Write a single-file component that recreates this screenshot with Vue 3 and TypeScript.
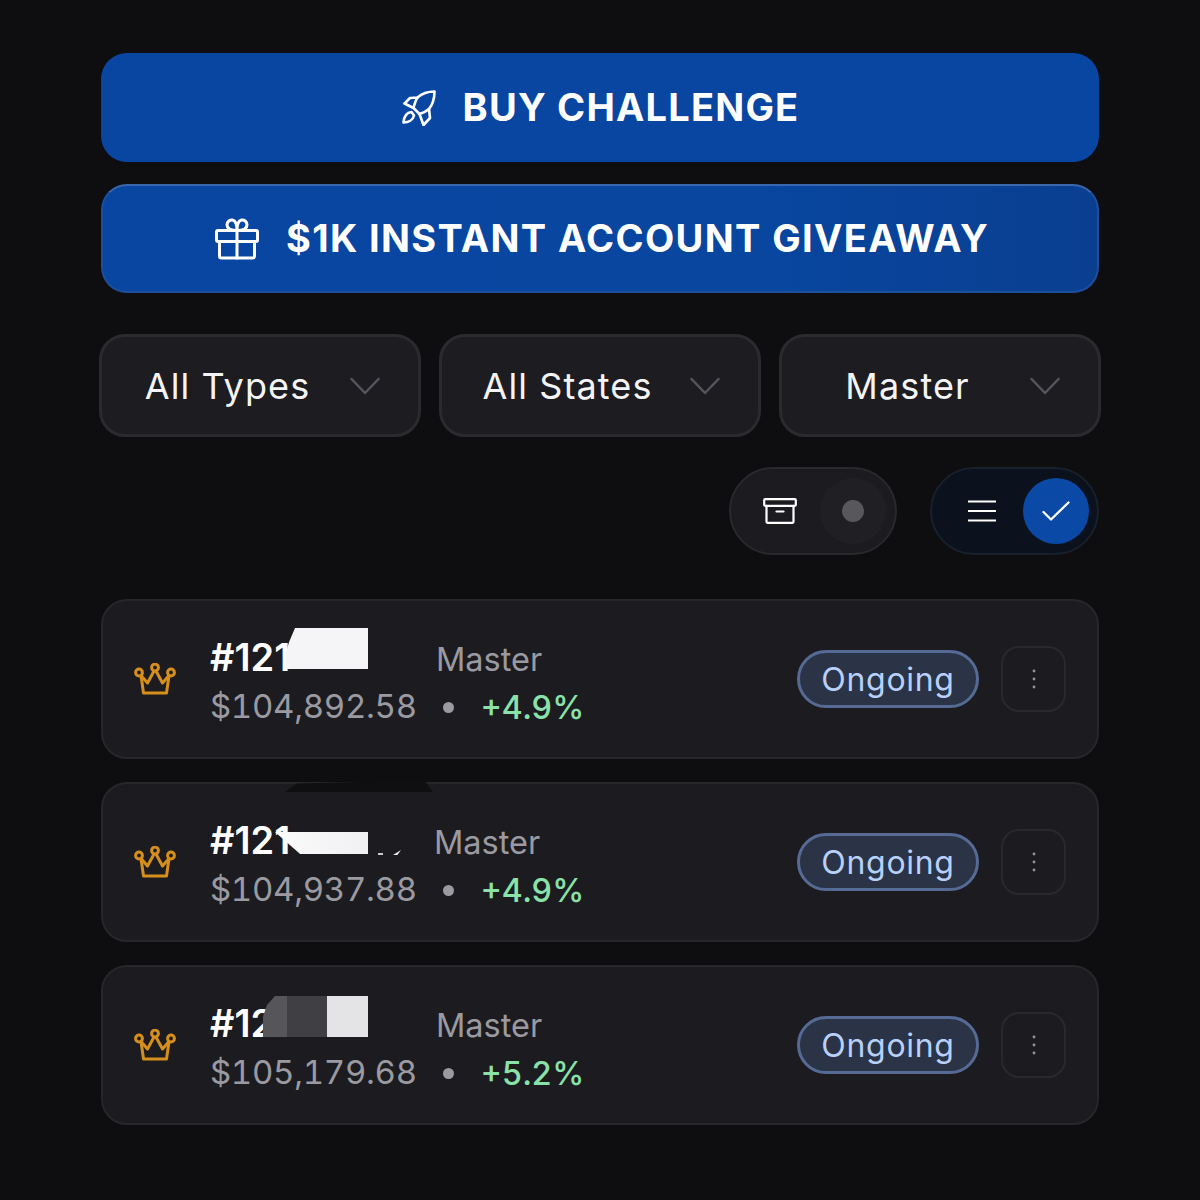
<script setup lang="ts">
interface Account {
  id: string
  amount: string
  gain: string
  shifted?: boolean
  patch: string
}

const filters = ['All Types', 'All States', 'Master']

const accounts: Account[] = [
  { id: '#121', amount: '$104,892.58', gain: '+4.9%', patch: 'patch-one' },
  { id: '#121', amount: '$104,937.88', gain: '+4.9%', shifted: true, patch: 'patch-two' },
  { id: '#12', amount: '$105,179.68', gain: '+5.2%', patch: 'patch-three' },
]
</script>

<template>
  <main class="page">
    <button class="cta">
      <svg class="rocket" viewBox="0 0 36 36" fill="none" stroke="currentColor" stroke-width="2.6" stroke-linejoin="round" stroke-linecap="round">
        <path d="M33.500 1.500C27 1.500 21 3.500 16.500 7.500L9 8L3.500 13.500L12.500 18L18.500 24L22.500 35L29 28L28 19C32 14 33.500 8 33.500 1.500Z" />
        <path d="M16.500 7.500C14.500 10.500 13.500 14 12.500 18M18.500 24C22 23 25 21.500 28 19" />
        <path d="M10.500 22C6 22.500 3 26.500 2.500 32.500C7.500 32.500 12 30 13 25.500Z" />
      </svg>
      <span class="cta-label">BUY CHALLENGE</span>
    </button>
    <button class="cta cta-promo">
      <svg class="gift" viewBox="0 0 44 42" fill="none" stroke="currentColor" stroke-width="3" stroke-linejoin="round" stroke-linecap="round">
        <rect x="1.500" y="12.500" width="41" height="11" rx="1.500" />
        <path d="M4.500 23.500V38a2 2 0 0 0 2 2h31a2 2 0 0 0 2-2V23.500" />
        <path d="M22 12.500V40" />
        <path d="M22 12.500C17 12.500 12 12 12 6.800C12 3.500 15 1.500 17.500 2C20.500 2.700 22 7 22 12.500C22 7 23.500 2.700 26.500 2C29 1.500 32 3.500 32 6.800C32 12 27 12.500 22 12.500Z" />
      </svg>
      <span class="cta-label">$1K INSTANT ACCOUNT GIVEAWAY</span>
    </button>

    <div class="filters">
      <div v-for="filter in filters" :key="filter" class="select">
        <span class="select-label">{{ filter }}</span>
        <svg class="chevron" viewBox="0 0 30 18" fill="none" stroke="currentColor" stroke-width="2.500" stroke-linecap="round" stroke-linejoin="round">
          <path d="M1.500 2L15 16L28.500 2" />
        </svg>
      </div>
    </div>

    <div class="toggles">
      <div class="toggle toggle-archive">
        <svg class="archive" viewBox="0 0 34 26" fill="none" stroke="currentColor" stroke-width="2.200" stroke-linejoin="round" stroke-linecap="round">
          <rect x="1.200" y="1.200" width="31.600" height="6.600" rx="1" />
          <path d="M3.500 7.800V23.800a1 1 0 0 0 1 1h25a1 1 0 0 0 1-1V7.800" />
          <path d="M13.500 13.500H20.500" />
        </svg>
        <span class="knob"><span class="knob-dot"></span></span>
      </div>
      <div class="toggle toggle-list">
        <svg class="menu-icon" viewBox="0 0 30 22" fill="none" stroke="currentColor" stroke-width="2.200">
          <path d="M1 1.500H29M1 11H29M1 20.500H29" />
        </svg>
        <span class="check">
          <svg viewBox="0 0 28 20" fill="none" stroke="currentColor" stroke-width="2.300" stroke-linecap="round" stroke-linejoin="round">
            <path d="M1.500 11L9 18.500L26.500 1.500" />
          </svg>
        </span>
      </div>
    </div>

    <section class="accounts">
      <article v-for="account in accounts" :key="account.amount" class="card">
        <svg class="crown" viewBox="0 0 42 32" fill="none" stroke="currentColor" stroke-width="3" stroke-linejoin="round">
          <circle cx="5" cy="9.500" r="3.400" />
          <circle cx="21" cy="4.500" r="3.400" />
          <circle cx="37" cy="9.500" r="3.400" />
          <path d="M7 12.500L13.500 20L20 8M22 8L28.500 20L35 12.500" />
          <path d="M7 12.500L9.500 30H32.500L35 12.500" />
        </svg>
        <div class="info">
          <div class="info-top">
            <span class="account-id" :class="{ shifted: account.shifted }">{{ account.id }}</span>
            <span class="account-type">Master</span>
          </div>
          <div class="info-bottom">
            <span class="amount">{{ account.amount }}</span>
            <span class="bullet"></span>
            <span class="gain">{{ account.gain }}</span>
          </div>
        </div>
        <span class="badge">Ongoing</span>
        <button class="more">
          <svg viewBox="0 0 4 20" fill="currentColor">
            <circle cx="2" cy="2" r="1.400" />
            <circle cx="2" cy="10" r="1.400" />
            <circle cx="2" cy="18" r="1.400" />
          </svg>
        </button>
        <div class="patch" :class="account.patch"></div>
        <template v-if="account.shifted">
          <div class="blot"></div>
          <div class="speck speck-dot"></div>
          <div class="speck speck-slash"></div>
        </template>
      </article>
    </section>
  </main>
</template>

<style>
html,
body {
  background: #0e0e10;
}
</style>

<style scoped>
.page {
  box-sizing: border-box;
  width: 1200px;
  height: 1200px;
  padding: 53px 101px 0;
  background: #0e0e10;
  font-family: Inter, "Liberation Sans", sans-serif;
  display: flex;
  flex-direction: column;
}

.cta {
  height: 109px;
  border: 0;
  border-radius: 26px;
  padding: 0;
  background: #0846a2;
  color: #fff;
  font: inherit;
  font-size: 38px;
  font-weight: 700;
  letter-spacing: 1.200px;
  display: flex;
  align-items: center;
  justify-content: center;
  gap: 26px;
}

.cta-label {
  margin-top: -2px;
}

.cta-promo {
  margin-top: 22px;
  gap: 27px;
  padding-left: 4px;
  letter-spacing: 1.350px;
  border: 2px solid #1c4f9c;
  border-top-color: #3a68ad;
  background: linear-gradient(90deg, #0846a2 0%, #0846a0 65%, #0a3f90 100%);
}

.rocket {
  width: 36px;
  height: 36px;
}

.gift {
  width: 44px;
  height: 42px;
}

.filters {
  display: flex;
  gap: 18px;
  margin: 41px -2px 0;
}

.select {
  box-sizing: border-box;
  width: 322px;
  height: 103px;
  border: 3px solid #2b2b2f;
  border-radius: 26px;
  background: #1c1c21;
  padding: 0 38.5px 0 29px;
  display: flex;
  align-items: center;
  color: #f4f4f6;
}

.select-label {
  flex: 1;
  font-size: 36px;
  letter-spacing: 1.1px;
  text-align: center;
  white-space: nowrap;
}

.chevron {
  width: 30px;
  height: 18px;
  margin-left: 25.5px;
  color: #55555b;
}

.toggles {
  display: flex;
  justify-content: flex-end;
  gap: 33px;
  margin-top: 30px;
}

.toggle {
  box-sizing: border-box;
  height: 88px;
  border-radius: 44px;
  border: 2px solid #29292d;
  display: flex;
  align-items: center;
  justify-content: space-between;
}

.toggle-archive {
  width: 168px;
  padding: 0 9px 0 32px;
  background: #1b1b20;
}

.toggle-list {
  width: 169px;
  padding: 0 8px 0 35px;
  background: #0b121d;
  border-color: #18202c;
}

.archive {
  width: 34px;
  height: 26px;
  color: #fff;
}

.knob {
  width: 66px;
  height: 66px;
  border-radius: 50%;
  background: #1f1f24;
  display: flex;
  align-items: center;
  justify-content: center;
}

.knob-dot {
  width: 22px;
  height: 22px;
  border-radius: 50%;
  background: #57575c;
}

.menu-icon {
  width: 30px;
  height: 22px;
  color: #fff;
}

.check {
  width: 66px;
  height: 66px;
  border-radius: 50%;
  background: #0a4aa6;
  color: #fff;
  display: flex;
  align-items: center;
  justify-content: center;
}

.check svg {
  width: 28px;
  height: 20px;
}

.accounts {
  display: flex;
  flex-direction: column;
  gap: 23px;
  margin-top: 44px;
}

.card {
  position: relative;
  box-sizing: border-box;
  height: 160px;
  border: 2px solid #27272b;
  border-radius: 26px;
  background: #1c1c20;
  padding: 0 31px;
  display: flex;
  align-items: center;
}

.crown {
  width: 42px;
  height: 32px;
  color: #d68f1c;
  flex: none;
}

.info {
  flex: 1;
  margin-left: 34px;
  padding-top: 4px;
  display: flex;
  flex-direction: column;
  gap: 6px;
}

.info-top {
  display: flex;
  align-items: baseline;
  height: 44px;
  margin-top: -1px;
}

.account-id {
  width: 226px;
  font-size: 38px;
  font-weight: 600;
  color: #fff;
}

.account-id.shifted {
  width: 224px;
}

.account-type {
  font-size: 32.500px;
  color: #9a9aa0;
  margin-top: -1px;
}

.info-bottom {
  display: flex;
  align-items: center;
  height: 44px;
}

.amount {
  font-size: 33px;
  letter-spacing: -0.300px;
  font-variant-numeric: tabular-nums;
  color: #9a9aa0;
}

.bullet {
  width: 11px;
  height: 11px;
  border-radius: 50%;
  background: #9a9aa0;
  margin: 4px 27px 0 26px;
}

.gain {
  font-size: 32.300px;
  font-weight: 500;
  font-variant-numeric: tabular-nums;
  color: #8ae2a9;
  margin-top: 3px;
}

.badge {
  box-sizing: border-box;
  width: 182px;
  height: 58px;
  border: 3px solid #556a95;
  border-radius: 29px;
  background: #2a3446;
  color: #b8d0fa;
  font-size: 32px;
  letter-spacing: 0.7px;
  display: flex;
  align-items: center;
  justify-content: center;
}

.more {
  box-sizing: border-box;
  width: 65px;
  height: 66px;
  margin-left: 22px;
  border: 2px solid #29292d;
  border-radius: 18px;
  background: transparent;
  color: #94949a;
  padding: 0;
  display: flex;
  align-items: center;
  justify-content: center;
}

.more svg {
  width: 4px;
  height: 20px;
}

.patch {
  position: absolute;
}

.patch-one {
  left: 181px;
  top: 27px;
  width: 84px;
  height: 41px;
  background: #f5f5f7;
  clip-path: polygon(2px 100%, 2px 60%, 5px 35%, 11px 0, 100% 0, 100% 100%);
}

.patch-two {
  left: 172px;
  top: 48px;
  width: 93px;
  height: 22px;
  background: linear-gradient(90deg, #fbfbfc 0%, #f0f0f2 100%);
  clip-path: polygon(0 0, 100% 0, 100% 100%, 27% 100%);
}

.patch-three {
  left: 160px;
  top: 29px;
  width: 105px;
  height: 41px;
  background: linear-gradient(90deg, #56565a 0 23%, #3f3f44 23% 61%, #e4e4e6 61% 100%);
  clip-path: polygon(0 50%, 4px 22%, 12px 0, 100% 0, 100% 100%, 0 100%);
}

.blot {
  position: absolute;
  left: 182px;
  top: -4px;
  width: 148px;
  height: 12px;
  background: #0f0f11;
  clip-path: polygon(0 100%, 8% 30%, 62% 12%, 62% 0, 94% 0, 100% 100%);
}

.speck {
  position: absolute;
  background: #c9c9cc;
}

.speck-dot {
  left: 275px;
  top: 69px;
  width: 5px;
  height: 2px;
}

.speck-slash {
  left: 290px;
  top: 66px;
  width: 8px;
  height: 5px;
  background: #eeeeef;
  clip-path: polygon(100% 0, 55% 100%, 0 100%);
}
</style>
